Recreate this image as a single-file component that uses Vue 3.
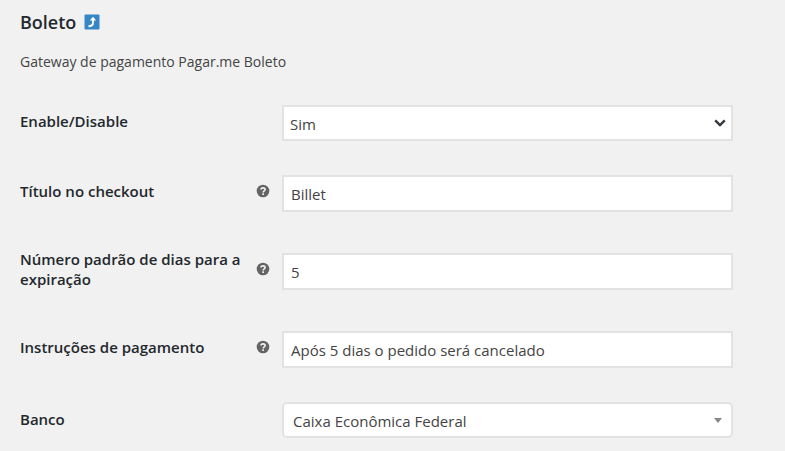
<script setup>
import { ref } from 'vue';

const fields = ref([
  { id: 'enabled', label: 'Enable/Disable', type: 'select', value: 'Sim', options: ['Sim', 'Não'] },
  { id: 'title', label: 'Título no checkout', type: 'text', value: 'Billet', help: true },
  { id: 'days', label: 'Número padrão de dias para a expiração', type: 'text', value: '5', help: true },
  { id: 'instructions', label: 'Instruções de pagamento', type: 'text', value: 'Após 5 dias o pedido será cancelado', help: true },
  { id: 'bank', label: 'Banco', type: 'select', value: 'Caixa Econômica Federal', options: ['Caixa Econômica Federal'], rounded: true }
]);
</script>

<template>
  <form class="settings" @submit.prevent>
    <h2 class="title">
      Boleto
      <a href="#" class="back-link" @click.prevent>
        <svg width="16" height="16" viewBox="0 0 16 16">
          <rect x="0.5" y="0.5" width="15" height="15" rx="1" fill="#3586c6" />
          <path d="M4.5 12.3C7.6 12.3 9 11 9 8.5V5.5" fill="none" stroke="#fff" stroke-width="2" />
          <path d="M5.8 6.5L9 2.8L12.2 6.5Z" fill="#fff" />
        </svg>
      </a>
    </h2>
    <p class="description">Gateway de pagamento Pagar.me Boleto</p>

    <div v-for="field in fields" :key="field.id" class="row">
      <label :for="field.id">{{ field.label }}</label>
      <span class="help">
        <svg v-if="field.help" width="14" height="14" viewBox="0 0 14 14">
          <circle cx="7" cy="7" r="6.3" fill="#646464" />
          <path d="M5 5.6C5 3.3 9.1 3.3 9.1 5.5C9.1 6.9 7.2 6.8 7.2 8.5" fill="none" stroke="#f1f1f1" stroke-width="1.6" />
          <rect x="6.3" y="9.3" width="1.7" height="1.7" fill="#f1f1f1" />
        </svg>
      </span>
      <div v-if="field.type === 'select'" class="select-wrap" :class="{ rounded: field.rounded }">
        <select :id="field.id" v-model="field.value">
          <option v-for="option in field.options" :key="option" :value="option">{{ option }}</option>
        </select>
        <svg v-if="field.rounded" class="arrow" width="8" height="5" viewBox="0 0 8 5">
          <path d="M0 0H8L4 5Z" fill="#888" />
        </svg>
        <svg v-else class="arrow" width="12" height="8" viewBox="0 0 12 8">
          <path d="M1.2 1.3L6 6L10.8 1.3" fill="none" stroke="#32373c" stroke-width="2.4" />
        </svg>
      </div>
      <input v-else :id="field.id" v-model="field.value" type="text">
    </div>
  </form>
</template>

<style>
body {
  background: #f1f1f1;
}
</style>

<style scoped>
.settings {
  padding: 8px 52px 0 20px;
  font-family: "Open Sans", "Noto Sans", sans-serif;
  font-size: 15px;
  line-height: 20px;
  color: #444;
}

.title {
  display: flex;
  align-items: center;
  gap: 8px;
  margin: 0;
  font-size: 18px;
  line-height: 28px;
  font-weight: 600;
  color: #23282d;
}

.back-link {
  display: flex;
}

.description {
  margin: 16px 0;
  font-size: 14px;
}

.row {
  display: grid;
  grid-template-columns: 235px 27px minmax(0, 1fr);
  align-items: center;
}

.row label {
  padding: 20px 10px 25px 0;
  font-weight: 600;
  color: #23282d;
}

.help {
  display: flex;
  padding: 0 0 6px 1px;
}

.row input,
.select-wrap {
  margin: 17px 0;
}

.row input,
.row select {
  display: block;
  box-sizing: border-box;
  width: 100%;
  height: 37px;
  padding: 0 7px;
  border: 2px solid #e2e2e2;
  border-radius: 0;
  background: #fff;
  font: inherit;
  color: #444;
}

.row select {
  height: 36px;
  padding: 2px 24px 0 6px;
  appearance: none;
}

.select-wrap {
  position: relative;
}

.arrow {
  position: absolute;
  top: 14px;
  right: 7px;
  pointer-events: none;
}

.rounded .arrow {
  top: 16px;
  right: 11px;
}

.row .rounded select {
  padding-left: 9px;
  border-radius: 5px;
}

.row:last-child {
  align-items: end;
  padding-bottom: 12px;
}

.row:last-child .select-wrap {
  margin-bottom: 0;
}

.row:last-child label {
  padding-bottom: 9px;
}
</style>
